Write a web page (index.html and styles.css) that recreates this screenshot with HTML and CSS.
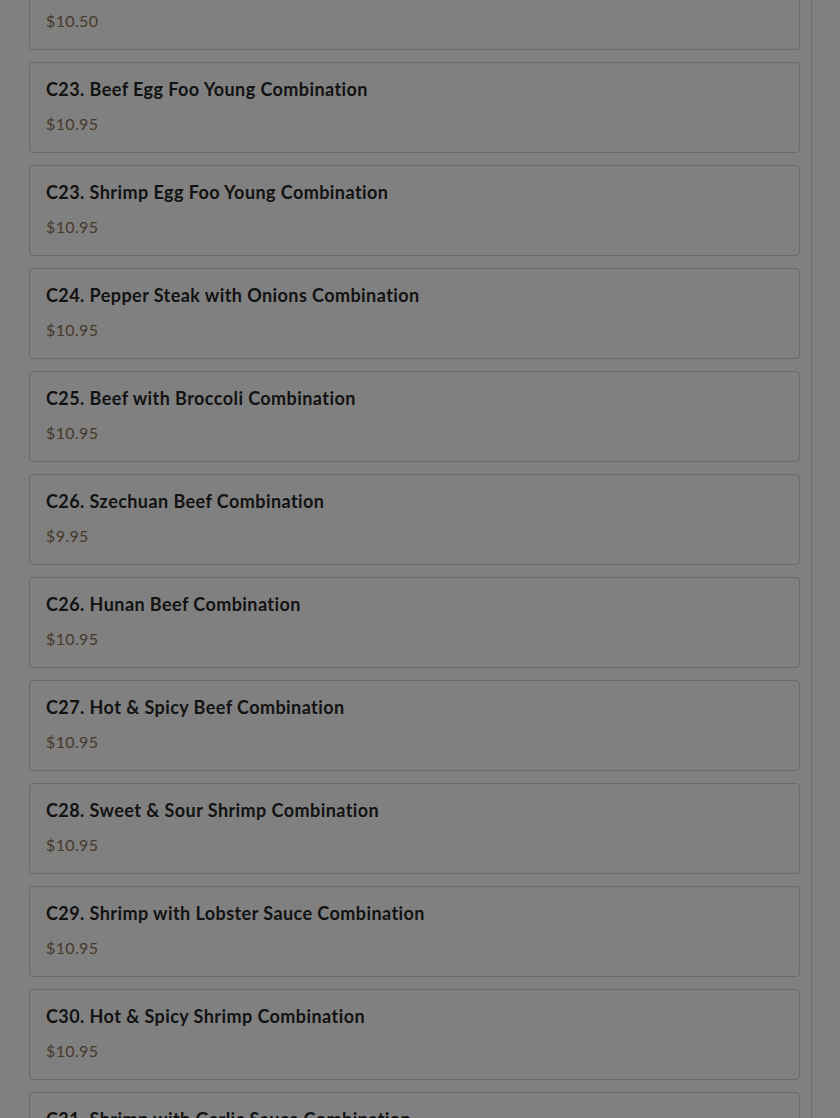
FILE: index.html
```html
<!DOCTYPE html>
<html>
<head>
<meta charset="utf-8">
<link rel="stylesheet" href="styles.css">
</head>
<body>
<div class="page">
  <div class="list">
    <div class="card"><div class="title">C22. Combination</div><div class="price">$10.50</div></div>
    <div class="card"><div class="title">C23. Beef Egg Foo Young Combination</div><div class="price">$10.95</div></div>
    <div class="card"><div class="title">C23. Shrimp Egg Foo Young Combination</div><div class="price">$10.95</div></div>
    <div class="card"><div class="title">C24. Pepper Steak with Onions Combination</div><div class="price">$10.95</div></div>
    <div class="card"><div class="title">C25. Beef with Broccoli Combination</div><div class="price">$10.95</div></div>
    <div class="card"><div class="title">C26. Szechuan Beef Combination</div><div class="price">$9.95</div></div>
    <div class="card"><div class="title">C26. Hunan Beef Combination</div><div class="price">$10.95</div></div>
    <div class="card"><div class="title">C27. Hot &amp; Spicy Beef Combination</div><div class="price">$10.95</div></div>
    <div class="card"><div class="title">C28. Sweet &amp; Sour Shrimp Combination</div><div class="price">$10.95</div></div>
    <div class="card"><div class="title">C29. Shrimp with Lobster Sauce Combination</div><div class="price">$10.95</div></div>
    <div class="card"><div class="title">C30. Hot &amp; Spicy Shrimp Combination</div><div class="price">$10.95</div></div>
    <div class="card"><div class="title">C31. Shrimp with Garlic Sauce Combination</div><div class="price">$10.95</div></div>
  </div>
</div>
</body>
</html>
```

FILE: styles.css
```css
html, body {
  margin: 0;
  padding: 0;
  background: #808080;
  height: 1118px;
  overflow: hidden;
}
.page {
  width: 771px;
  padding: 0 11px 0 29px;
  border-right: 1px solid #6c6c6c;
  min-height: 1118px;
  font-family: Lato, "Open Sans", sans-serif;
}
.list {
  display: flex;
  flex-direction: column;
  gap: 12px;
  margin-top: -41px;
}
.card {
  border: 1px solid #6a6a6a;
  border-radius: 4px;
  padding: 14px 16px 17px;
  display: flex;
  flex-direction: column;
  gap: 12px;
  background: #808080;
}
.title {
  font-size: 18px;
  font-weight: 700;
  line-height: 24px;
  letter-spacing: 0.43px;
  color: #121212;
}
.price {
  font-size: 16px;
  line-height: 22px;
  letter-spacing: 0.35px;
  color: #46392a;
}
```
